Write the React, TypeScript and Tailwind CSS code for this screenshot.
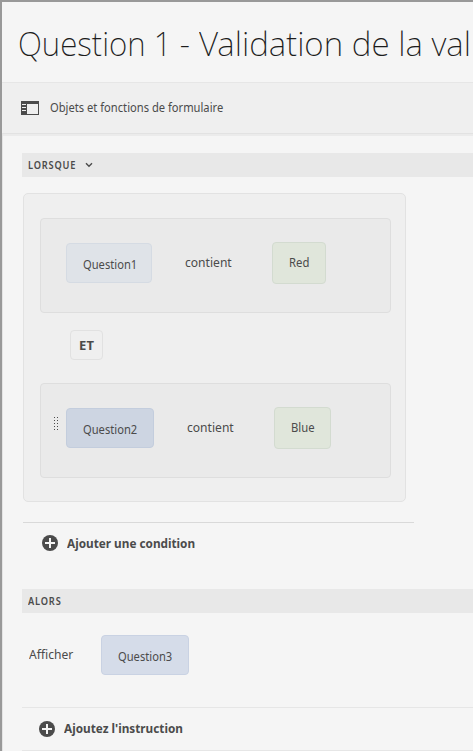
import type { ReactNode } from "react";

function Rail() {
  return (
    <svg width="18" height="14" viewBox="0 0 18 14" className="shrink-0" shapeRendering="crispEdges">
      <path fill="#4b4b4b" fillRule="evenodd" d="M0 0h18v14H0zM6 3v10h11V3zM1 3v1h4V3zM1 6v1h4V6zM1 9v1h4V9z" />
    </svg>
  );
}

function AddIcon() {
  return (
    <svg width="16" height="16" viewBox="0 0 16 16" className="-mt-px shrink-0">
      <circle cx="8" cy="8" r="8" fill="#4b4b4b" />
      <path d="M8 3v10M3 8h10" stroke="#f5f5f5" strokeWidth="2" />
    </svg>
  );
}

function Grip() {
  return (
    <svg width="4" height="13" viewBox="0 0 4 13" shapeRendering="crispEdges">
      {[0, 3, 6, 9, 12].map((y) => (
        <path key={y} d={`M0 ${y}h1v1H0zM3 ${y}h1v1H3z`} fill="#4b4b4b" />
      ))}
    </svg>
  );
}

function SectionBar({ children }: { children: ReactNode }) {
  return (
    <div className="ml-5 flex h-6 items-center bg-[#e8e8e8] pl-1.5 text-[10px] font-semibold leading-[22px] tracking-[0.9px]">
      {children}
    </div>
  );
}

function Chip({ className, children }: { className: string; children: ReactNode }) {
  return (
    <div className={`flex h-10 shrink-0 items-center rounded-[4px] border pl-4 pt-[3px] text-[12px] ${className}`}>
      <span className="origin-left scale-x-[0.93]">{children}</span>
    </div>
  );
}

function ValueChip({ className, children }: { className: string; children: ReactNode }) {
  return (
    <div className={`flex h-[42px] shrink-0 items-center rounded-[4px] border border-[#d3dbd0] bg-[#e0e6db] pl-4 text-[12px] ${className}`}>
      <span className="origin-left scale-x-[0.94]">{children}</span>
    </div>
  );
}

function Operator() {
  return (
    <span className="ml-[33px] w-[87px] shrink-0 pt-[10px] text-[13px] leading-5">
      <span className="inline-block origin-left scale-x-[0.93]">contient</span>
    </span>
  );
}

function AddLabel({ children }: { children: ReactNode }) {
  return <span className="origin-left scale-x-[0.905] text-[13px] font-bold">{children}</span>;
}

function Condition({ grip, children }: { grip?: boolean; children: ReactNode }) {
  return (
    <div className="flex h-[95px] w-[351px] items-start rounded-[4px] border border-[#dedede] bg-[#eaeaea] pt-[23px]">
      <div className="w-[25px] shrink-0 pl-[13px] pt-[10px]">{grip && <Grip />}</div>
      {children}
    </div>
  );
}

export default function App() {
  return (
    <div className="h-[751px] w-[473px] overflow-hidden whitespace-nowrap border-l-2 border-t-2 border-[#999] bg-[#f5f5f5] font-['Noto_Sans','Open_Sans',sans-serif] text-[#4b4b4b]">
      <header className="h-20 pl-4 pt-4">
        <h1 className="flex text-[34px] font-extralight leading-[50px] text-[#1c1c1c]">
          <span className="w-[181px] shrink-0">
            <span className="inline-block origin-left scale-x-[0.925]">Question 1 - </span>
          </span>
          <span className="shrink-0 origin-left scale-x-[0.98]">Validation de la val</span>
        </h1>
      </header>
      <div className="flex h-[52px] items-center gap-[11px] border-y border-t-[#e6e6e6] border-b-[#e2e2e2] bg-[#efefef] pl-[19px]">
        <Rail />
        <span className="origin-left scale-x-[0.93] text-[12px]">Objets et fonctions de formulaire</span>
      </div>
      <main className="h-[617px] border-l border-[#e4e4e4]">
        <div className="h-0.5 bg-[#ebebeb]" />
        <div className="-ml-px pt-[17px]">
          <SectionBar>
            <span className="w-[57px]">
              <span className="inline-block origin-left scale-x-[0.925]">LORSQUE</span>
            </span>
            <svg width="8" height="6" viewBox="0 0 8 6" fill="none">
              <path d="M1 1.3 4 4.3 7 1.3" stroke="#4b4b4b" strokeWidth="1.4" />
            </svg>
          </SectionBar>
          <section className="ml-[21px] mt-4 h-[309px] w-[383px] rounded-[5px] border border-[#e2e2e2] bg-[#efefef] pl-4 pt-6">
            <Condition>
              <Chip className="mt-px w-[86px] border-[#d5dbe3] bg-[#dfe3e8]">Question1</Chip>
              <Operator />
              <ValueChip className="w-[54px]">Red</ValueChip>
            </Condition>
            <div className="ml-[30px] mt-[17px] flex h-[30px] w-[33px] items-center justify-center rounded-[4px] border border-[#e1e1e1] pt-0.5 text-[13px] font-bold">
              ET
            </div>
            <div className="h-[23px]" />
            <Condition grip>
              <Chip className="mt-px w-[88px] border-[#c3cddd] bg-[#cdd5e2]">Question2</Chip>
              <Operator />
              <ValueChip className="w-[57px]">Blue</ValueChip>
            </Condition>
          </section>
          <div className="ml-[21px] mt-5 flex h-[42px] w-[391px] items-center gap-[9px] border-t border-[#d9d9d9] pl-[19px]">
            <AddIcon />
            <AddLabel>Ajouter une condition</AddLabel>
          </div>
          <div className="h-[25px]" />
          <SectionBar>
            <span className="origin-left scale-x-[0.925]">ALORS</span>
          </SectionBar>
          <div className="flex h-[94px] items-start pl-[27px] pt-[22px]">
            <span className="w-[72px] pt-[9px] text-[13px] leading-5">
              <span className="inline-block origin-left scale-x-[0.93]">Afficher</span>
            </span>
            <Chip className="w-[88px] border-[#c9d2e3] bg-[#d5dce9]">Question3</Chip>
          </div>
          <div className="ml-5 flex h-11 items-center gap-[9px] border-y border-[#e6e6e6] pl-[17px]">
            <AddIcon />
            <AddLabel>Ajoutez l'instruction</AddLabel>
          </div>
        </div>
      </main>
    </div>
  );
}
